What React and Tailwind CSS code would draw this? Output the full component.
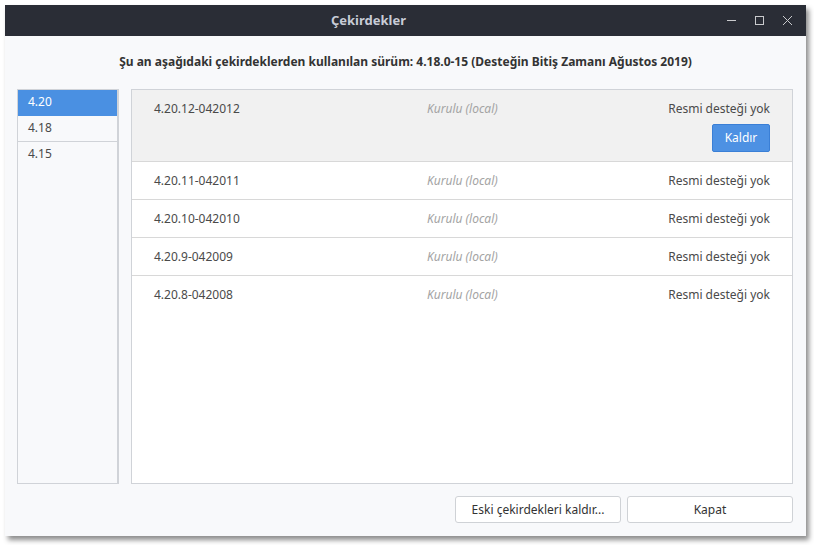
import React from 'react';
import { useState } from 'react';

// Kernel manager dialog: version series on the left, installed kernels on the right
const series = ['4.20', '4.18', '4.15'];

const kernels = [
  { name: '4.20.12-042012', state: 'Kurulu (local)', support: 'Resmi desteği yok' },
  { name: '4.20.11-042011', state: 'Kurulu (local)', support: 'Resmi desteği yok' },
  { name: '4.20.10-042010', state: 'Kurulu (local)', support: 'Resmi desteği yok' },
  { name: '4.20.9-042009', state: 'Kurulu (local)', support: 'Resmi desteği yok' },
  { name: '4.20.8-042008', state: 'Kurulu (local)', support: 'Resmi desteği yok' },
];

function TitleBar() {
  return (
    <div className="flex h-[31px] items-center bg-[#2a2d36] text-[#c8ccd6]">
      <div className="flex-1 pl-[6px] text-center text-[13px] font-bold">Çekirdekler</div>
      <div className="flex items-center gap-[17px] pr-[13px] text-[#c9cacd]">
        <svg width="11" height="11" viewBox="0 0 11 11">
          <path d="M1 5.5h9" stroke="currentColor" strokeWidth="1" />
        </svg>
        <svg width="11" height="11" viewBox="0 0 11 11">
          <rect x="1.5" y="1.5" width="8" height="8" fill="none" stroke="currentColor" strokeWidth="1" />
        </svg>
        <svg width="11" height="11" viewBox="0 0 11 11">
          <path d="M1 1l9 9M10 1l-9 9" stroke="currentColor" strokeWidth="1" />
        </svg>
      </div>
    </div>
  );
}

export default function App() {
  const [active, setActive] = useState('4.20');

  return (
    <div className="h-[545px] w-[814px] bg-white pl-[5px] pt-[5px] font-['Noto_Sans',sans-serif]">
      <div className="flex h-[531px] w-[801px] flex-col bg-[#f8f9fb] shadow-[3px_4px_5px_rgba(0,0,0,0.45)]">
        <TitleBar />

        <div className="pt-[17px] pb-[18px] text-center text-[12px] font-bold text-[#333]">
          Şu an aşağıdaki çekirdeklerden kullanılan sürüm: 4.18.0-15 (Desteğin Bitiş Zamanı Ağustos 2019)
        </div>

        <div className="flex flex-1 gap-[12px] pl-[12px] pr-[13px]">
          {/* series list */}
          <div className="w-[102px] border border-r-2 border-[#d0d3d8] bg-[#f8f9fb]">
            {series.map((s, i) => (
              <div
                key={s}
                onClick={() => setActive(s)}
                className={`h-[26px] px-[10px] pt-[3px] text-[12px] ${
                  i < series.length - 1 ? 'border-b' : ''
                } ${
                  active === s
                    ? 'border-[#4a90e2] bg-[#4a90e2] text-white'
                    : 'border-[#d0d3d8] bg-[#f8f9fb] text-[#4a4a4a]'
                }`}
              >
                {s}
              </div>
            ))}
          </div>

          {/* kernel rows */}
          <div className="flex-1 border border-[#d0d3d8] bg-white">
            {kernels.map((k, i) => (
              <div
                key={k.name}
                className={`pl-[22px] pr-[22px] text-[12px] ${
                  i < kernels.length - 1 ? 'border-b border-[#d8d8d8]' : ''
                } ${i === 0 ? 'h-[72px] bg-[#f1f1f1] pt-[10px]' : 'h-[38px] pt-[10px]'}`}
              >
                <div className="flex items-center">
                  <span className="w-[273px] text-[#4a4a4a]">{k.name}</span>
                  <span className="flex-1 italic text-[#a4a4a4]">{k.state}</span>
                  <span className="text-[#4a4a4a]">{k.support}</span>
                </div>
                {i === 0 && (
                  <div className="mt-[6px] flex justify-end">
                    <button className="h-[28px] w-[58px] rounded-[2px] border border-[#3a7fd6] bg-[#4d91e3] text-[12px] text-white">
                      Kaldır
                    </button>
                  </div>
                )}
              </div>
            ))}
          </div>
        </div>

        {/* dialog buttons */}
        <div className="flex justify-end gap-[6px] pl-[12px] pr-[13px] pt-[12px] pb-[13px]">
          <button className="h-[27px] w-[166px] rounded-[3px] border border-[#cfd2d6] bg-white text-[12px] text-[#333]">
            Eski çekirdekleri kaldır...
          </button>
          <button className="h-[27px] w-[166px] rounded-[3px] border border-[#cfd2d6] bg-white text-[12px] text-[#333]">
            Kapat
          </button>
        </div>
      </div>
    </div>
  );
}
